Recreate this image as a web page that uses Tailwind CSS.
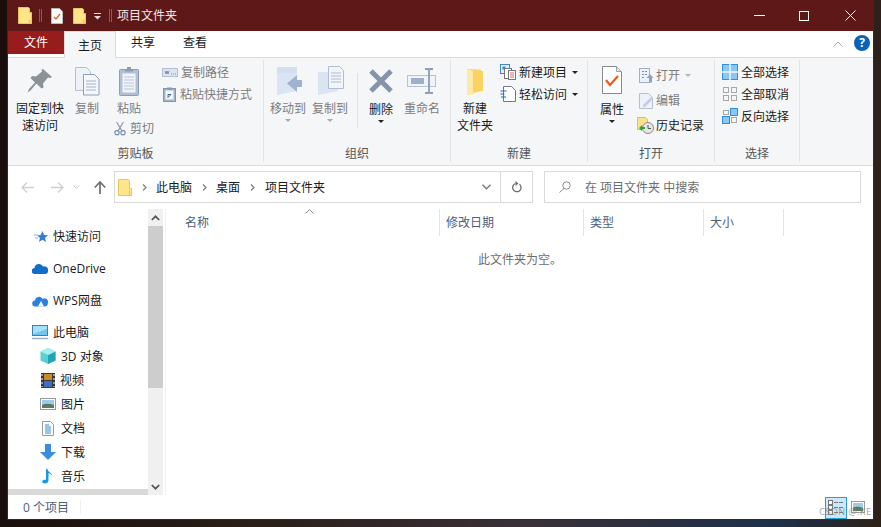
<!DOCTYPE html>
<html lang="zh-CN">
<head>
<meta charset="utf-8">
<title>项目文件夹</title>
<script src="https://cdn.jsdelivr.net/npm/@tailwindcss/browser@4"></script>
</head>
<body class="m-0 w-[881px] h-[527px] overflow-hidden bg-[linear-gradient(90deg,#1a0f0c_0%,#2a2019_30%,#3a3038_60%,#1d3048_88%,#2c2118_100%)] [font-family:'Open_Sans','Noto_Sans_CJK_SC',sans-serif] text-[12px] leading-[17px] text-[#1a1a1a]">
<div class="relative ml-[7px] w-[867px] h-[520px] border-x border-b border-[#5e1818] bg-white flex flex-col">

  <!-- title bar -->
  <div class="h-[31px] shrink-0 bg-[#5e1818] flex items-center text-[#f2e8e8]">
    <svg class="ml-[10px]" width="14" height="17" viewBox="0 0 14 17"><path d="M.5.5h10l1 1v4h2v11H.5z" fill="#ffe48a" stroke="#e9c65c"/><path d="M10.5 12.5h3v4h-3z" fill="#f3cf63"/></svg>
    <div class="ml-[7px] w-[3px] h-[13px] border-x border-[#8a5a5a]"></div>
    <svg class="ml-[9px]" width="12" height="16" viewBox="0 0 12 16"><path d="M.5.5h8l3 3v12H.5z" fill="#fff" stroke="#b9b9b9"/><path d="M3 9l2 2 4-5" fill="none" stroke="#e8612c" stroke-width="1.4"/></svg>
    <svg class="ml-[10px]" width="13" height="16" viewBox="0 0 13 16"><path d="M.5.5h9l1 1v4h2v10H.5z" fill="#ffe48a" stroke="#e9c65c"/><path d="M9.5 11.5h3v4h-3z" fill="#f3cf63"/></svg>
    <svg class="ml-[8px] mt-[2px]" width="7" height="7" viewBox="0 0 7 7"><path d="M0 0h7v1H0z" fill="#e6dada"/><path d="M0 3h7L3.5 6.500z" fill="#e6dada"/></svg>
    <div class="ml-[8px] w-[3px] h-[13px] border-x border-[#8a5a5a]"></div>
    <span class="ml-[5px]">项目文件夹</span>
    <div class="ml-auto flex items-center mr-[17px]">
      <div class="w-[11px] h-px bg-white mr-[34px]"></div>
      <div class="w-[10px] h-[10px] border border-white mr-[36px]"></div>
      <svg width="11" height="11" viewBox="0 0 11 11"><path d="M.5.500l10 10M10.500.500l-10 10" stroke="#fff" fill="none"/></svg>
    </div>
  </div>

  <!-- tabs -->
  <div class="h-[26px] shrink-0 bg-white flex relative z-10">
    <div class="w-[56px] h-[23px] bg-[#971c1c] text-white flex items-center justify-center">文件</div>
    <div class="w-[52px] h-[27px] bg-[#f5f6f7] border-x border-t border-[#dadbdc] flex items-center justify-center">主页</div>
    <div class="ml-[15px] h-[23px] flex items-center">共享</div>
    <div class="ml-[28px] h-[23px] flex items-center">查看</div>
    <svg class="ml-auto mt-[10px]" width="10" height="6" viewBox="0 0 10 6"><path d="M.5 5.500L5 1l4.500 4.500" fill="none" stroke="#a9a9a9"/></svg>
    <div class="ml-[11px] mr-[3px] mt-[4px] w-[16px] h-[16px] rounded-full bg-[#0b63b8] text-white text-[12px] font-bold leading-[16px] text-center">?</div>
  </div>

  <!-- ribbon -->
  <div class="h-[108px] shrink-0 bg-[#f5f6f7] border-t border-[#dadbdc] pt-[2px] flex">
    <!-- clipboard -->
    <div class="w-[256px] h-[102px] border-r border-[#e1e3e6] flex flex-col">
      <div class="h-[84px] flex pl-[8px]">
        <div class="w-[48px] pt-[5px] flex flex-col items-center">
          <svg width="32" height="32" viewBox="0 0 32 32"><path d="M19 4l9 8-2 1-2-.5-5 6 .5 4-2 1-5-5-6 7-3 2 1.500-3.500 6-6.500-4.500-4.500 1.500-2 4 .5 6-5-.5-2z" fill="#8c9097"/></svg>
          <div class="mt-[3px] text-center whitespace-nowrap">固定到快<br>速访问</div>
        </div>
        <div class="w-[46px] pt-[5px] flex flex-col items-center text-[#7c7c7c]">
          <svg width="32" height="32" viewBox="0 0 32 32"><path d="M4.500 2.500h11l4 4v19h-15z" fill="#eef2f8" stroke="#b3c0d4"/><path d="M12.500 9.500h11l4.500 4.500v16h-15.500z" fill="#f4f7fb" stroke="#8da0ba"/><path d="M15 16h10M15 19h10M15 22h10M15 25h10" stroke="#a5b2c6"/></svg>
          <div class="mt-[3px]">复制</div>
        </div>
        <div class="w-[42px] pt-[5px] flex flex-col items-start text-[#7c7c7c]">
          <svg class="ml-[3px]" width="32" height="32" viewBox="0 0 32 32"><rect x="6.500" y="4.500" width="19" height="26" rx="1" fill="#b2c0d5" stroke="#8c9db6"/><path d="M9.500 8.500h13v19h-13z" fill="#f1f4f9"/><path d="M11 12h10M11 15h10M11 18h10M11 21h10M11 24h10" stroke="#b9c5d7"/><path d="M12 6.500h8v-2h-2V2h-4v2.500h-2z" fill="#8c9db6"/></svg>
          <div class="mt-[3px] ml-[7px]">粘贴</div>
          <div class="mt-[3px] ml-[4px] flex items-center h-[17px] whitespace-nowrap">
            <svg width="12" height="17" viewBox="0 0 14 17"><path d="M3 1l6 10M11 1L5 11" stroke="#8a97a8" stroke-width="1.300" fill="none"/><circle cx="3.500" cy="13.500" r="2.500" fill="none" stroke="#6f8bb0" stroke-width="1.300"/><circle cx="10.500" cy="13.500" r="2.500" fill="none" stroke="#6f8bb0" stroke-width="1.300"/></svg>
            <span class="ml-[4px]">剪切</span>
          </div>
        </div>
        <div class="ml-[10px] pt-[1px] text-[#7c7c7c]">
          <div class="h-[22px] flex items-center whitespace-nowrap">
            <svg width="16" height="9" viewBox="0 0 16 9"><rect x=".5" y=".5" width="15" height="8" fill="#dbe4f1" stroke="#b3c0d4"/><path d="M3 3l1 3 1-3 1 3 1-3M9 6h1M11 6h1M13 6h1" stroke="#6f7b8c" fill="none" stroke-width=".8"/></svg>
            <span class="ml-[3px]">复制路径</span>
          </div>
          <div class="h-[22px] flex items-center whitespace-nowrap">
            <svg class="ml-px" width="13" height="16" viewBox="0 0 13 16"><rect x=".5" y="2.500" width="12" height="13" fill="#a3b3ca" stroke="#8295ae"/><rect x="2.500" y="4.500" width="8" height="9" fill="#f4f7fb"/><path d="M4 1.500h5v2H4z" fill="#8295ae"/><path d="M5 12V8.500h3M8 8.500L5.500 11" stroke="#456a9c" fill="none"/></svg>
            <span class="ml-[4px]">粘贴快捷方式</span>
          </div>
        </div>
      </div>
      <div class="h-[18px] leading-[20px] text-center text-[#555]">剪贴板</div>
    </div>

    <!-- organize -->
    <div class="w-[187px] h-[102px] border-r border-[#e1e3e6] flex flex-col">
      <div class="h-[84px] flex pl-[6px]">
        <div class="w-[36px] pt-[5px] flex flex-col items-center text-[#7c7c7c]">
          <svg width="32" height="32" viewBox="0 0 32 32"><path d="M5 2h20v24l-20 4z" fill="#dbe4f2"/><path d="M5 2h20v6H5z" fill="#d3deee"/><path d="M25 10v5h5v7h-5v5l-10-8.500z" fill="#9fb2cf"/></svg>
          <div class="mt-[3px] whitespace-nowrap">移动到</div>
          <div class="mt-[2px] w-0 h-0 border-x-[3px] border-x-transparent border-t-[3px] border-t-[#a9a9a9]"></div>
        </div>
        <div class="ml-[6px] w-[36px] pt-[5px] flex flex-col items-center text-[#7c7c7c]">
          <svg width="32" height="32" viewBox="0 0 32 32"><path d="M4 7h20v19L4 30z" fill="#dbe4f2"/><path d="M14.500 1.500h11l4 4v18h-15z" fill="#f1f4f9" stroke="#afbdd2"/><path d="M17 8h10M17 11h10M17 14h10M17 17h10" stroke="#b0bcd0"/></svg>
          <div class="mt-[3px] whitespace-nowrap">复制到</div>
          <div class="mt-[2px] w-0 h-0 border-x-[3px] border-x-transparent border-t-[3px] border-t-[#a9a9a9]"></div>
        </div>
        <div class="ml-[9px] mt-[13px] mb-[16px] w-px bg-[#dfe1e4]"></div>
        <div class="ml-[10px] w-[26px] pt-[8px] flex flex-col items-center">
          <svg width="26" height="26" viewBox="0 0 26 26"><path d="M3 3l20 20M23 3L3 23" stroke="#8593ac" stroke-width="5" fill="none"/></svg>
          <div class="mt-[7px] whitespace-nowrap">删除</div>
          <div class="mt-[2px] w-0 h-0 border-x-[3px] border-x-transparent border-t-[3px] border-t-[#222]"></div>
        </div>
        <div class="ml-[10px] w-[36px] pt-[8px] flex flex-col items-center text-[#7c7c7c]">
          <svg width="30" height="26" viewBox="0 0 30 26"><rect x=".5" y="7.500" width="28" height="11" fill="#f0f4f9" stroke="#b6c3d6"/><rect x="4" y="10" width="13" height="6" fill="#9fb0c9"/><path d="M18 1h3l1 1 1-1h3M22 2v22M18 25h3l1-1 1 1h3" stroke="#8c9db6" stroke-width="1.800" fill="none"/></svg>
          <div class="mt-[6px] whitespace-nowrap">重命名</div>
        </div>
      </div>
      <div class="h-[18px] leading-[20px] text-center text-[#555]">组织</div>
    </div>

    <!-- new -->
    <div class="w-[137px] h-[102px] border-r border-[#e1e3e6] flex flex-col">
      <div class="h-[84px] flex pl-[6px]">
        <div class="w-[36px] pt-[5px] flex flex-col items-center">
          <svg width="32" height="32" viewBox="0 0 32 32"><path d="M8 4l14 .5V26l-14 4z" fill="#f7d671"/><path d="M8 4l6 2v24l-6-1z" fill="#fdeaa8"/><path d="M14 6h10v20H14z" fill="#f9d25f"/></svg>
          <div class="mt-[3px] text-center whitespace-nowrap">新建<br>文件夹</div>
        </div>
        <div class="ml-[7px] pt-[1px]">
          <div class="h-[22px] flex items-center whitespace-nowrap">
            <svg width="16" height="16" viewBox="0 0 16 16"><rect x=".5" y=".5" width="9" height="9" fill="#e8f1fb" stroke="#3f87c9"/><rect x="2.500" y="2.500" width="3" height="3" fill="#3f87c9"/><rect x="4.500" y="4.500" width="7" height="10" fill="#fff" stroke="#777"/><rect x="8.500" y="6.500" width="7" height="9" fill="#fff" stroke="#777"/><path d="M10 9h4M10 11h4M10 13h4" stroke="#d96a6a"/></svg>
            <span class="ml-[3px]">新建项目</span>
            <div class="ml-[5px] w-0 h-0 border-x-[3px] border-x-transparent border-t-[3px] border-t-[#222]"></div>
          </div>
          <div class="h-[22px] flex items-center whitespace-nowrap">
            <svg width="16" height="16" viewBox="0 0 16 16"><path d="M3.500.5h8l4 4v11h-12z" fill="#fff" stroke="#777"/><path d="M.5 5h6M.5 8h4M1 11h5" stroke="#1f6fc0" fill="none"/></svg>
            <span class="ml-[3px]">轻松访问</span>
            <div class="ml-[5px] w-0 h-0 border-x-[3px] border-x-transparent border-t-[3px] border-t-[#222]"></div>
          </div>
        </div>
      </div>
      <div class="h-[18px] leading-[20px] text-center text-[#555]">新建</div>
    </div>

    <!-- open -->
    <div class="w-[127px] h-[102px] border-r border-[#e1e3e6] flex flex-col">
      <div class="h-[84px] flex pl-[12px]">
        <div class="w-[24px] pt-[5px] flex flex-col items-center">
          <svg width="24" height="30" viewBox="0 0 24 30"><path d="M2.500 1.500h14l5 5v22h-19z" fill="#fff" stroke="#8a8a8a"/><path d="M16.500 1.500v5h5" fill="#e4e4e4" stroke="#a0a0a0"/><path d="M6 15l4 5 8-9" fill="none" stroke="#ee5a1c" stroke-width="2.200"/></svg>
          <div class="mt-[6px] whitespace-nowrap">属性</div>
          <div class="mt-[2px] w-0 h-0 border-x-[3px] border-x-transparent border-t-[3px] border-t-[#222]"></div>
        </div>
        <div class="ml-[13px] pt-[3px]">
          <div class="h-[25px] flex items-center whitespace-nowrap text-[#7c7c7c]">
            <svg class="ml-[2px]" width="15" height="15" viewBox="0 0 15 15"><rect x=".5" y=".5" width="10" height="14" fill="#eef2f8" stroke="#9fb0c9"/><path d="M3 3.500h2M6 3.500h2M3 6.500h2M6 6.500h2M3 9.500h2" stroke="#7e8fa9"/><path d="M11 6l3.500 4H13v4.500h-3V10H7.500z" fill="#8ea2bf"/></svg>
            <span class="ml-[2px]">打开</span>
            <div class="ml-[5px] w-0 h-0 border-x-[3px] border-x-transparent border-t-[3px] border-t-[#b3b3b3]"></div>
          </div>
          <div class="h-[25px] flex items-center whitespace-nowrap text-[#7c7c7c]">
            <svg class="ml-[2px]" width="15" height="16" viewBox="0 0 15 16"><path d="M.5.5h9l4 4v11H.5z" fill="#eef2f8" stroke="#b3c0d4"/><path d="M4 12l8-8 2 2-8 8H4z" fill="#c3cfe0"/></svg>
            <span class="ml-[2px]">编辑</span>
          </div>
          <div class="h-[25px] flex items-center whitespace-nowrap">
            <svg width="17" height="17" viewBox="0 0 17 17"><path d="M.5.5h8l2 2v10h-10z" fill="#fbe38d" stroke="#e0c04f"/><circle cx="11" cy="11" r="5.500" fill="#e6e6e6" stroke="#8a8a8a"/><path d="M11 8v3.500h3" stroke="#555" fill="none"/><path d="M2 11l3-3v2h3v2H5v2z" fill="#2da52d"/></svg>
            <span class="ml-[2px]">历史记录</span>
          </div>
        </div>
      </div>
      <div class="h-[18px] leading-[20px] text-center text-[#555]">打开</div>
    </div>

    <!-- select -->
    <div class="w-[85px] h-[102px] border-r border-[#e1e3e6] flex flex-col">
      <div class="h-[84px] pl-[7px] pt-[1px]">
        <div class="h-[22px] flex items-center whitespace-nowrap">
          <svg width="16" height="16" viewBox="0 0 16 16"><rect x=".5" y=".5" width="15" height="15" fill="#8cc6f5" stroke="#2f8fdc"/><path d="M8 0v16M0 8h16" stroke="#f5f6f7" stroke-width="1.500"/></svg>
          <span class="ml-[3px]">全部选择</span>
        </div>
        <div class="h-[22px] flex items-center whitespace-nowrap">
          <svg width="16" height="16" viewBox="0 0 16 16" fill="none" stroke="#a8a8a8"><rect x="1.500" y="1.500" width="5" height="5"/><rect x="9.500" y="1.500" width="5" height="5"/><rect x="1.500" y="9.500" width="5" height="5"/><rect x="9.500" y="9.500" width="5" height="5"/></svg>
          <span class="ml-[3px]">全部取消</span>
        </div>
        <div class="h-[22px] flex items-center whitespace-nowrap">
          <svg width="16" height="16" viewBox="0 0 16 16"><rect x=".5" y="8.500" width="7" height="7" fill="#8cc6f5" stroke="#2f8fdc"/><rect x="8.500" y=".5" width="7" height="7" fill="#8cc6f5" stroke="#2f8fdc"/><rect x="1.500" y="2.500" width="5" height="4" fill="none" stroke="#a8a8a8"/><rect x="9.500" y="9.500" width="5" height="5" fill="none" stroke="#a8a8a8"/></svg>
          <span class="ml-[3px]">反向选择</span>
        </div>
      </div>
      <div class="h-[18px] leading-[20px] text-center text-[#555]">选择</div>
    </div>
  </div>

  <!-- navigation -->
  <div class="h-[44px] shrink-0 border-t border-[#dadbdc] bg-white flex items-center pb-[1px]">
    <svg class="ml-[13px]" width="13" height="11" viewBox="0 0 13 11"><path d="M6 .5L1 5.500l5 5M1 5.500h12" fill="none" stroke="#d0d0d0" stroke-width="1.300"/></svg>
    <svg class="ml-[17px]" width="13" height="11" viewBox="0 0 13 11"><path d="M7 .5l5 5-5 5M12 5.500H0" fill="none" stroke="#d0d0d0" stroke-width="1.300"/></svg>
    <svg class="ml-[9px]" width="7" height="5" viewBox="0 0 7 5"><path d="M.5.500l3 3 3-3" fill="none" stroke="#d0d0d0"/></svg>
    <svg class="ml-[14px]" width="12" height="13" viewBox="0 0 12 13"><path d="M.8 6.500L6 1l5.200 5.500M6 1v12" fill="none" stroke="#6e6e6e" stroke-width="1.700"/></svg>
    <div class="ml-[8px] w-[419px] h-[32px] border border-[#d9d9d9] flex items-center">
      <svg class="ml-[3px]" width="14" height="17" viewBox="0 0 14 17"><path d="M.5.500h10l1 1v8h2v7H.5z" fill="#ffe48a" stroke="#eac558"/><path d="M11.500 11v5.500" stroke="#eac558"/></svg>
      <svg class="ml-[10px]" width="5" height="7" viewBox="0 0 5 7"><path d="M1 .5l3 3-3 3" fill="none" stroke="#808080" stroke-width="1.300"/></svg>
      <span class="ml-[9px]">此电脑</span>
      <svg class="ml-[10px]" width="5" height="7" viewBox="0 0 5 7"><path d="M1 .5l3 3-3 3" fill="none" stroke="#808080" stroke-width="1.300"/></svg>
      <span class="ml-[9px]">桌面</span>
      <svg class="ml-[10px]" width="5" height="7" viewBox="0 0 5 7"><path d="M1 .5l3 3-3 3" fill="none" stroke="#808080" stroke-width="1.300"/></svg>
      <span class="ml-[10px]">项目文件夹</span>
      <svg class="ml-auto mr-[9px]" width="9" height="6" viewBox="0 0 9 6"><path d="M.5.800l4 4 4-4" fill="none" stroke="#777" stroke-width="1.400"/></svg>
      <div class="w-px h-[30px] bg-[#d9d9d9]"></div>
      <svg class="ml-[11px] mr-[10px]" width="10" height="12" viewBox="0 0 10 12"><path d="M7.500 3.200A4.200 4.200 0 1 1 3.500 2.500" fill="none" stroke="#6e6e6e" stroke-width="1.300"/><path d="M3.500 0v5l3-2.500z" fill="#6e6e6e"/></svg>
    </div>
    <div class="ml-[11px] w-[317px] h-[32px] border border-[#d9d9d9] flex items-center text-[#6d6d6d]">
      <svg class="ml-[14px]" width="12" height="12" viewBox="0 0 12 12"><circle cx="7.500" cy="4.500" r="3.700" fill="none" stroke="#8a8a8a"/><path d="M5 7.500L.5 11.500" stroke="#8a8a8a" fill="none"/></svg>
      <span class="ml-[14px] whitespace-pre">在 项目文件夹 中搜索</span>
    </div>
  </div>

  <!-- main -->
  <div class="h-[286px] shrink-0 flex overflow-hidden">
    <div class="w-[140px] shrink-0 pt-[16px] flex flex-col">
      <div class="h-[24px] flex items-center pl-[26px]">
        <svg width="14" height="14" viewBox="0 0 14 14"><path d="M8.500 1l1.500 4 4 .3-3 2.700 1 4-3.500-2.200L5 12l1-4-3-2.700h3.500z" fill="#2f7fd6"/><path d="M0 5h4M1 8h3" stroke="#7db7ea"/></svg>
        <span class="ml-[5px]">快速访问</span>
      </div>
      <div class="h-[8px]"></div>
      <div class="h-[24px] flex items-center pl-[24px]">
        <svg width="16" height="11" viewBox="0 0 16 11"><path d="M3 11a3 3 0 0 1-.5-6A4.500 4.500 0 0 1 11 3.500 3.800 3.800 0 0 1 16 8a3 3 0 0 1-3 3z" fill="#0f6fc8"/></svg>
        <span class="ml-[5px]">OneDrive</span>
      </div>
      <div class="h-[8px]"></div>
      <div class="h-[24px] flex items-center pl-[24px]">
        <svg width="16" height="12" viewBox="0 0 16 12"><path d="M3.500 11.500a3 3 0 0 1-.5-6A4 4 0 0 1 10.500 4 3.500 3.500 0 0 1 15.800 8a3 3 0 0 1-3 3.500z" fill="#2a80e0"/><path d="M6 11.500L9 6l3 5.500" fill="#fff"/></svg>
        <span class="ml-[5px]">WPS网盘</span>
      </div>
      <div class="h-[8px]"></div>
      <div class="h-[24px] flex items-center pl-[24px]">
        <svg width="16" height="15" viewBox="0 0 16 15"><rect x=".5" y=".5" width="15" height="10" fill="#6cc7f3" stroke="#3a7fb8"/><path d="M1 1h14v3L1 9z" fill="#a5e1fa"/><path d="M0 13.500h16" stroke="#9ab2c9" stroke-width="1.500"/></svg>
        <span class="ml-[5px]">此电脑</span>
      </div>
      <div class="h-[24px] flex items-center pl-[32px]">
        <svg width="16" height="16" viewBox="0 0 16 16"><path d="M8 0l7.500 3.500v9L8 16 .5 12.500v-9z" fill="#59cfd6"/><path d="M8 7l7.500-3.500v9L8 16z" fill="#1fa5b5"/><path d="M8 0l7.500 3.500L8 7 .5 3.500z" fill="#a6eef0"/></svg>
        <span class="ml-[5px] whitespace-pre">3D 对象</span>
      </div>
      <div class="h-[24px] flex items-center pl-[33px]">
        <svg width="14" height="15" viewBox="0 0 14 15"><rect width="14" height="15" fill="#3a3a3a"/><path d="M1 1v2M1 5v2M1 9v2M1 13v1M13 1v2M13 5v2M13 9v2M13 13v1" stroke="#ddd" stroke-width="1.200"/><rect x="3" y="1" width="8" height="6" fill="#c98a2e"/><rect x="3" y="8" width="8" height="6" fill="#3f6fc0"/></svg>
        <span class="ml-[5px]">视频</span>
      </div>
      <div class="h-[24px] flex items-center pl-[32px]">
        <svg width="16" height="12" viewBox="0 0 16 12"><rect x=".5" y=".5" width="15" height="11" fill="#fff" stroke="#9a9a9a"/><rect x="2" y="2" width="12" height="8" fill="#9fcbe8"/><path d="M2 7c4-2 8-1 12 0v3H2z" fill="#587a5f"/></svg>
        <span class="ml-[5px]">图片</span>
      </div>
      <div class="h-[24px] flex items-center pl-[34px]">
        <svg width="12" height="15" viewBox="0 0 12 15"><path d="M.5.500h8l3 3v11H.5z" fill="#fff" stroke="#9a9a9a"/><path d="M3 4h4M3 6h6M3 8h6M3 10h6M3 12h6" stroke="#2f8fc9"/></svg>
        <span class="ml-[7px]">文档</span>
      </div>
      <div class="h-[24px] flex items-center pl-[32px]">
        <svg width="16" height="16" viewBox="0 0 16 16"><path d="M5 0h6v8h5l-8 8-8-8h5z" fill="#3b8de0"/></svg>
        <span class="ml-[5px]">下载</span>
      </div>
      <div class="h-[24px] flex items-center pl-[34px]">
        <svg width="12" height="16" viewBox="0 0 12 16"><path d="M4 1h1.500c0 3 5 3.500 5 7.500 0-2-3-3-4-3.500v7.500c0 2-2 3-4 3S0 14 .5 13s2-1.500 3.500-1z" fill="#109be8"/></svg>
        <span class="ml-[7px]">音乐</span>
      </div>
      <div class="mt-px h-[6px] bg-[#d9d9d9]"></div>
    </div>
    <!-- scrollbar -->
    <div class="w-[15px] shrink-0 bg-[#f0f0f0] flex flex-col ml-0">
      <div class="h-[17px] flex items-center justify-center">
        <svg width="9" height="6" viewBox="0 0 9 6"><path d="M.8 5L4.500 1.300 8.200 5" fill="none" stroke="#505050" stroke-width="1.700"/></svg>
      </div>
      <div class="h-[162px] bg-[#cdcdcd]"></div>
      <div class="mt-auto h-[17px] flex items-center justify-center">
        <svg width="9" height="6" viewBox="0 0 9 6"><path d="M.8 1l3.700 3.700L8.200 1" fill="none" stroke="#505050" stroke-width="1.700"/></svg>
      </div>
    </div>
    <!-- file list -->
    <div class="flex-1 ml-[2px] border-l border-[#f0f0f0] flex flex-col items-stretch">
      <div class="h-[27px] flex text-[#4c607a]">
        <div class="relative w-[274px] pl-[19px] flex items-center border-r border-[#e5e5e5]">
          名称
          <svg class="absolute left-[139px] top-[0px]" width="9" height="5" viewBox="0 0 9 5"><path d="M.5 4.500l4-4 4 4" fill="none" stroke="#8a8a8a"/></svg>
        </div>
        <div class="w-[144px] pl-[6px] flex items-center border-r border-[#e5e5e5]">修改日期</div>
        <div class="w-[120px] pl-[6px] flex items-center border-r border-[#e5e5e5]">类型</div>
        <div class="w-[80px] pl-[6px] flex items-center border-r border-[#e5e5e5]">大小</div>
      </div>
      <div class="pl-[312px] mt-[15px] text-[#6d6d6d]">此文件夹为空。</div>
    </div>
  </div>

  <!-- status -->
  <div class="flex-1 flex items-center bg-white text-[#4c607a]">
    <span class="ml-[15px] whitespace-pre">0 个项目</span>
    <div class="ml-[11px] w-px h-[14px] bg-[#f0f0f0]"></div>
    <div class="ml-auto w-[22px] h-[22px] mt-[1px] bg-[#cce8ff] border border-[#26a0da] flex items-center justify-center">
      <svg width="16" height="16" viewBox="0 0 16 16"><rect x=".5" y=".5" width="4" height="4" fill="#fff" stroke="#777"/><rect x=".5" y="5.500" width="4" height="4" fill="#fff" stroke="#777"/><rect x=".5" y="10.500" width="4" height="4" fill="#fff" stroke="#777"/><path d="M6 2.500h4M11 2.500h4M6 7.500h4M11 7.500h4M6 12.500h4M11 12.500h4" stroke="#777"/></svg>
    </div>
    <svg class="ml-[4px] mr-[8px]" width="14" height="12" viewBox="0 0 14 12"><rect x=".5" y=".5" width="13" height="11" fill="#fff" stroke="#9a9a9a"/><rect x="2" y="2" width="10" height="8" fill="#9fcbe8"/><path d="M2 7c3-2 7-1 10 0v3H2z" fill="#587a5f"/></svg>
  </div>

  <div class="absolute left-[811px] top-[505px] text-[9.500px] leading-[14px] tracking-[0.3px] whitespace-nowrap text-[#8a8a8a]/80">CSDN @.KE</div>
</div>
</body>
</html>
